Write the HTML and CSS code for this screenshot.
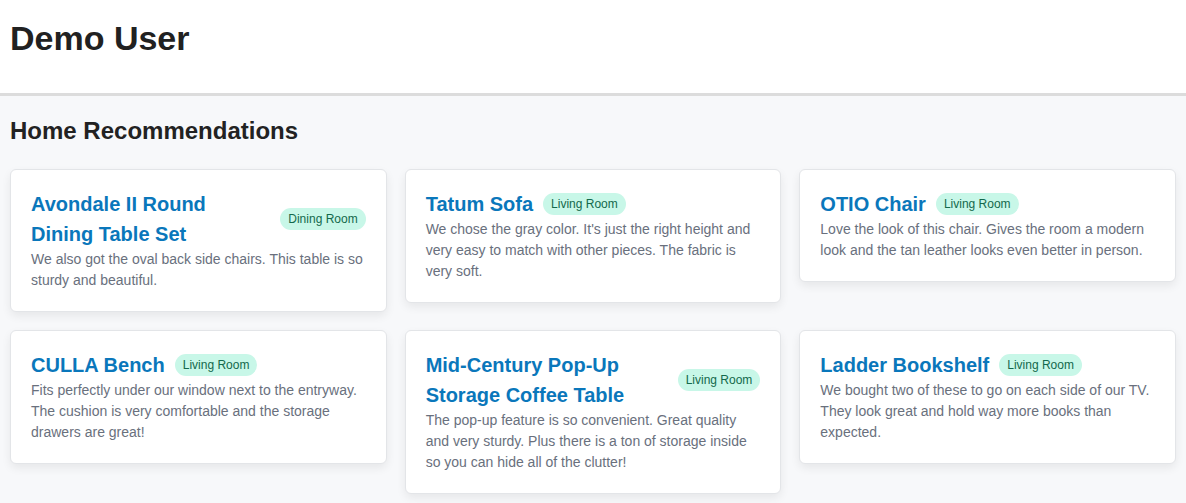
FILE: index.html
```html
<!DOCTYPE html>
<html lang="en">
<head>
<meta charset="utf-8">
<title>Demo User</title>
<link rel="stylesheet" href="styles.css">
</head>
<body>
<header class="top">
  <h1 class="user">Demo User</h1>
</header>
<main class="page">
  <h2 class="section-title">Home Recommendations</h2>
  <div class="grid">
    <article class="card">
      <div class="card-head">
        <h3 class="card-title">Avondale II Round Dining Table Set</h3>
        <span class="badge">Dining Room</span>
      </div>
      <p class="card-text">We also got the oval back side chairs. This table is so sturdy and beautiful.</p>
    </article>
    <article class="card">
      <div class="card-head">
        <h3 class="card-title">Tatum Sofa</h3>
        <span class="badge">Living Room</span>
      </div>
      <p class="card-text">We chose the gray color. It's just the right height and very easy to match with other pieces. The fabric is very soft.</p>
    </article>
    <article class="card">
      <div class="card-head">
        <h3 class="card-title">OTIO Chair</h3>
        <span class="badge">Living Room</span>
      </div>
      <p class="card-text">Love the look of this chair. Gives the room a modern look and the tan leather looks even better in person.</p>
    </article>
    <article class="card">
      <div class="card-head">
        <h3 class="card-title">CULLA Bench</h3>
        <span class="badge">Living Room</span>
      </div>
      <p class="card-text">Fits perfectly under our window next to the entryway. The cushion is very comfortable and the storage drawers are great!</p>
    </article>
    <article class="card">
      <div class="card-head">
        <h3 class="card-title">Mid-Century Pop-Up Storage Coffee Table</h3>
        <span class="badge">Living Room</span>
      </div>
      <p class="card-text">The pop-up feature is so convenient. Great quality and very sturdy. Plus there is a ton of storage inside so you can hide all of the clutter!</p>
    </article>
    <article class="card">
      <div class="card-head">
        <h3 class="card-title">Ladder Bookshelf</h3>
        <span class="badge">Living Room</span>
      </div>
      <p class="card-text">We bought two of these to go on each side of our TV. They look great and hold way more books than expected.</p>
    </article>
  </div>
</main>
</body>
</html>
```
FILE: styles.css
```css
* { box-sizing: border-box; }
html, body { margin: 0; padding: 0; }
body {
  font-family: "Liberation Sans", Arial, Helvetica, sans-serif;
  background: #f7f8fa;
  color: #222;
}
.top {
  background: #fff;
  height: 96px;
  padding: 19px 10px 0;
  border-bottom: 3px solid #dcdcdc;
}
.user {
  margin: 0;
  font-size: 34px;
  font-weight: 700;
  color: #212121;
}
.page {
  padding: 21px 10px 20px;
}
.section-title {
  margin: 0 0 24px;
  font-size: 24px;
  font-weight: 700;
  color: #222;
}
.grid {
  display: grid;
  grid-template-columns: repeat(3, 1fr);
  gap: 18px;
  align-items: start;
}
.card {
  background: #fff;
  border: 1px solid #e3e5e8;
  border-radius: 6px;
  padding: 19px 20px 20px;
  box-shadow: 0 4px 10px rgba(0, 0, 0, 0.07);
}
.card-head {
  display: flex;
  align-items: center;
  gap: 10px;
}
.card-title {
  margin: 0;
  font-size: 20px;
  line-height: 30px;
  font-weight: 700;
  color: #0a77bb;
}
.badge {
  flex-shrink: 0;
  font-size: 12px;
  line-height: 16px;
  padding: 3px 8px;
  border-radius: 999px;
  background: #c8f7e8;
  color: #13694c;
  white-space: nowrap;
}
.card-text {
  margin: 0;
  font-size: 14px;
  line-height: 21px;
  color: #69707d;
}
```
